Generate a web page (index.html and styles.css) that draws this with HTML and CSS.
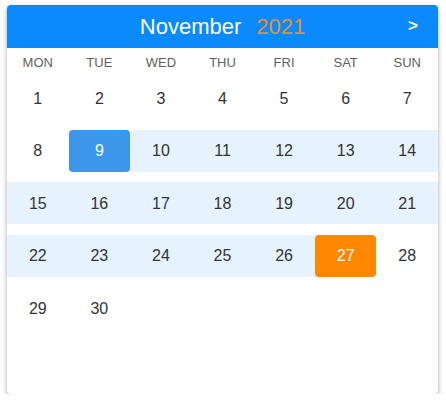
FILE: index.html
```html
<!DOCTYPE html>
<html>
<head>
<meta charset="utf-8">
<link rel="stylesheet" href="styles.css">
</head>
<body>
<div class="calendar">
  <div class="header">
    <div class="title"><span class="month">November</span><span class="year">2021</span></div>
    <span class="next">&gt;</span>
  </div>
  <div class="weekdays">
    <span>MON</span><span>TUE</span><span>WED</span><span>THU</span><span>FRI</span><span>SAT</span><span>SUN</span>
  </div>
  <div class="days">
    <span class="day">1</span><span class="day">2</span><span class="day">3</span><span class="day">4</span><span class="day">5</span><span class="day">6</span><span class="day">7</span>
    <span class="day">8</span><span class="day start">9</span><span class="day range">10</span><span class="day range">11</span><span class="day range">12</span><span class="day range">13</span><span class="day range">14</span>
    <span class="day range">15</span><span class="day range">16</span><span class="day range">17</span><span class="day range">18</span><span class="day range">19</span><span class="day range">20</span><span class="day range">21</span>
    <span class="day range">22</span><span class="day range">23</span><span class="day range">24</span><span class="day range">25</span><span class="day range">26</span><span class="day end">27</span><span class="day">28</span>
    <span class="day">29</span><span class="day">30</span>
  </div>
</div>
</body>
</html>
```
FILE: styles.css
```css
html, body {
  margin: 0;
  padding: 0;
  background: #ffffff;
}
body {
  font-family: "Liberation Sans", Arial, sans-serif;
  padding: 5px 8px 0 7px;
}
.calendar {
  width: 431px;
  height: 389px;
  background: #ffffff;
  border-radius: 4px;
  box-shadow: 0 2px 5px rgba(0, 0, 0, 0.35);
  overflow: hidden;
}
.header {
  height: 43px;
  background: #0a8afc;
  display: flex;
  align-items: center;
  justify-content: center;
  position: relative;
}
.title {
  font-size: 22px;
  color: #ffffff;
  display: flex;
  gap: 15px;
  padding-top: 1px;
}
.year {
  color: #e3912f;
}
.next {
  position: absolute;
  right: 20px;
  top: 11px;
  color: #ffffff;
  font-size: 17px;
  font-weight: bold;
}
.weekdays {
  display: grid;
  grid-template-columns: repeat(7, 1fr);
  height: 29px;
  align-items: center;
  font-size: 13px;
  color: #606060;
  text-align: center;
}
.days {
  display: grid;
  grid-template-columns: repeat(7, 1fr);
  grid-auto-rows: 42px;
  row-gap: 10.5px;
}
.day {
  display: flex;
  align-items: center;
  justify-content: center;
  font-size: 16px;
  color: #333333;
  padding-top: 1px;
}
.range {
  background: #e6f2fd;
}
.start {
  background: #3c96ea;
  color: #ffffff;
  border-radius: 4px;
}
.end {
  background: #ff8800;
  color: #ffffff;
  border-radius: 4px;
}
```
